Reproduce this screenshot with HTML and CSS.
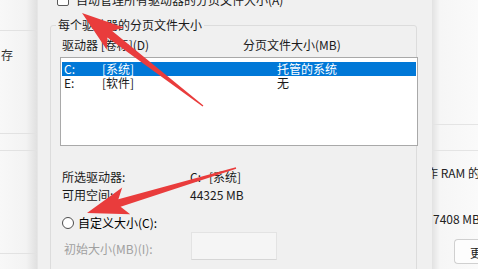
FILE: index.html
```html
<!DOCTYPE html>
<html lang="zh-CN">
<head>
  <meta charset="UTF-8" />
  <title>虚拟内存</title>
  <link rel="stylesheet" href="styles.css">
</head>
<body>
  <div class="screen">
    <aside class="back-left">
      <div class="bl-row bl-top"></div>
      <div class="bl-row bl-mem"><span>存</span></div>
      <div class="bl-row bl-band"></div>
      <div class="bl-row bl-mid"></div>
      <div class="bl-row bl-end"></div>
    </aside>

    <section class="dialog">
      <label class="check-row"><span class="checkbox"></span>自动管理所有驱动器的分页文件大小(A)</label>

      <fieldset class="group">
        <legend>每个驱动器的分页文件大小</legend>
        <div class="cols">
          <span class="col-drive">驱动器 [卷标](D)</span>
          <span>分页文件大小(MB)</span>
        </div>
        <div class="listbox">
          <div class="item selected"><span class="c1">C:</span><span class="c2">[系统]</span><span>托管的系统</span></div>
          <div class="item"><span class="c1">E:</span><span class="c2">[软件]</span><span>无</span></div>
        </div>
        <div class="info">
          <div class="info-row"><span class="k">所选驱动器:</span><span class="v"><span class="drv">C:</span>[系统]</span></div>
          <div class="info-row"><span class="k">可用空间:</span><span class="v">44325 MB</span></div>
        </div>
        <label class="radio-row"><span class="radio"></span>自定义大小(C):</label>
        <div class="field-row">
          <span class="k disabled">初始大小(MB)(I):</span>
          <span class="textbox"></span>
        </div>
      </fieldset>
    </section>

    <aside class="back-right">
      <div class="br-row br-top"></div>
      <div class="br-row br-band"></div>
      <div class="br-row br-body">
        <div class="cut-text ram">作 RAM 的</div>
        <div class="cut-text size">7408 MB</div>
        <div class="btn">更改</div>
      </div>
    </aside>

    <!-- red annotation arrows -->
    <svg class="marks" width="478" height="269" viewBox="0 0 478 269">
      <polygon fill="#e93c3c" points="82,13 123.8,27.5 112.2,31.1 203.4,105.4 202.6,106.6 107.4,37.5 106.8,49.7" />
      <polygon fill="#e93c3c" points="87,213 122.2,187.5 118.4,199.2 235.8,167.3 236.2,168.7 120.6,206.8 130.2,214.3" />
    </svg>
  </div>
</body>
</html>
```

FILE: styles.css
```css
html, body {
  margin: 0;
  overflow: hidden;
  font-family: "Noto Sans CJK SC", "Noto Sans", sans-serif;
  font-size: 12px;
  color: #1a1a1a;
}

.screen {
  position: relative;
  display: flex;
  width: 478px;
  height: 269px;
  overflow: hidden;
  background: #f0f0f0;
}

/* window behind, left side */
.back-left {
  width: 37px;
  flex: none;
  display: flex;
  flex-direction: column;
  background: linear-gradient(to right, #f8f8f8 0, #f3f3f3 70%, #e0e0e0 100%);
}

.bl-row { flex: none; }
.bl-row + .bl-row { border-top: 1px solid #e2e2e2; }
.bl-top { height: 30px; }
.bl-mem { height: 102px; }
.bl-mem span {
  display: block;
  margin-top: 17px;
  margin-left: 1px;
  line-height: 14px;
  color: #333;
}
.bl-band { height: 16px; }
.bl-mid { height: 102px; }
.bl-end { flex: 1; }

/* dialog */
.dialog {
  width: 395px;
  flex: none;
  background: #f0f0f0;
  border-left: 1px solid #e6e6e6;
  box-sizing: border-box;
}

.check-row {
  display: flex;
  align-items: center;
  height: 14px;
  line-height: 14px;
  margin-top: -7px;
  padding-left: 19px;
  gap: 7px;
}

.checkbox {
  width: 10px;
  height: 10px;
  border: 1px solid #5a5a5a;
  border-radius: 2px;
  background: #fff;
}

.group {
  margin: 11px 0 0 12px;
  padding: 0;
  width: 367px;
  height: 300px;
  border: 1px solid #dcdcdc;
  border-radius: 3px;
  box-sizing: border-box;
}

.group legend {
  margin-left: 5px;
  padding: 0 2px;
  line-height: 14px;
}

.cols {
  display: flex;
  margin-top: 6px;
  padding-left: 11px;
  line-height: 14px;
}

.col-drive { width: 181px; }

.listbox {
  margin: 5px -2px 0 9px;
  height: 89px;
  padding: 4px 1px 0;
  border: 1px solid #a9a9a9;
  background: #fff;
  box-sizing: border-box;
}

.item {
  display: flex;
  height: 14px;
  line-height: 14px;
  padding-left: 2px;
}

.item.selected {
  background: #0078d7;
  color: #fff;
}

.c1 { width: 38px; }
.c2 { width: 175px; }

.info {
  display: flex;
  flex-direction: column;
  gap: 4px;
  margin-top: 24px;
  padding-left: 11px;
}

.info-row {
  display: flex;
  line-height: 14px;
}

.k { width: 128px; flex: none; }
.drv { display: inline-block; width: 19px; }

.radio-row {
  display: flex;
  align-items: center;
  gap: 4px;
  height: 14px;
  line-height: 14px;
  margin-top: 14px;
  padding-left: 11px;
  color: #000;
}

.radio {
  width: 10px;
  height: 10px;
  border: 1px solid #4d4d4d;
  border-radius: 50%;
  background: #fff;
}

.field-row {
  display: flex;
  margin-top: 2px;
  padding-left: 13px;
}

.field-row .k {
  width: 127px;
  padding-top: 10px;
  line-height: 14px;
}

.disabled { color: #a0a0a0; }

.textbox {
  width: 86px;
  height: 28px;
  border: 1px solid #e3e3e3;
  border-bottom-color: #d6d6d6;
  background: #f5f5f5;
  box-sizing: border-box;
}

/* window behind, right side */
.back-right {
  flex: 1;
  display: flex;
  flex-direction: column;
  background: linear-gradient(to right, #e2e2e2 0, #f6f6f6 8px, #fafafa 100%);
  overflow: hidden;
}

.br-row { flex: none; }
.br-row + .br-row { border-top: 1px solid #e4e4e4; }
.br-top { height: 124px; }
.br-band { height: 25px; }
.br-body { flex: 1; }

.cut-text {
  white-space: nowrap;
  line-height: 14px;
  color: #222;
}

.ram {
  margin-top: 15px;
  margin-left: -6px;
}

.size {
  margin-top: 32px;
  margin-left: 1px;
}

.btn {
  margin: 13px 0 0 22px;
  height: 25px;
  padding-left: 15px;
  line-height: 25px;
  border: 1px solid #d0d0d0;
  border-right: none;
  border-radius: 4px 0 0 4px;
  background: #fdfdfd;
  white-space: nowrap;
  box-sizing: border-box;
}

.marks {
  position: absolute;
  left: 0;
  top: 0;
  pointer-events: none;
}
```
